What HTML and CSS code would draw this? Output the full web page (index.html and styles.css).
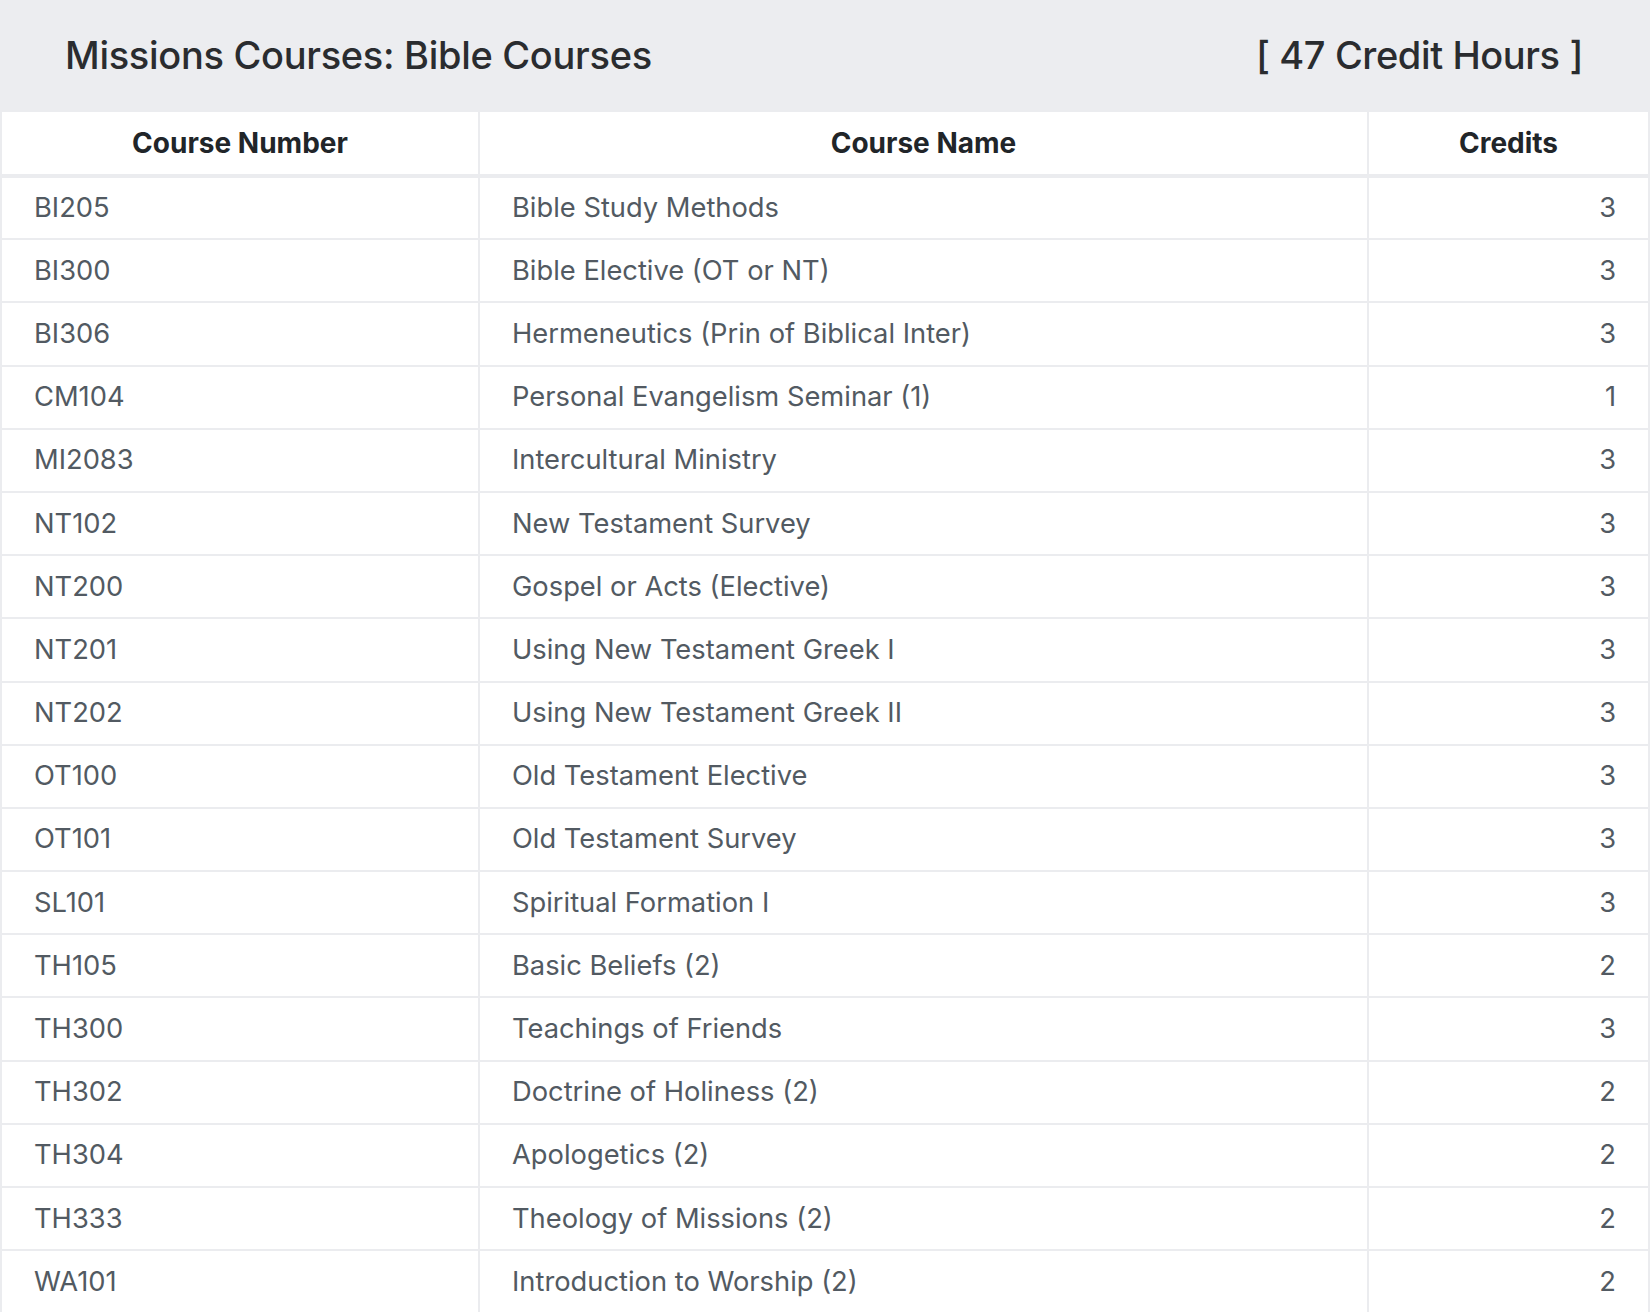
FILE: index.html
```html
<!DOCTYPE html>
<html lang="en">
<head>
    <meta charset="UTF-8">
    <meta name="viewport" content="width=device-width, initial-scale=1.0">
    <title>Missions Courses: Bible Courses</title>
    <link rel="stylesheet" href="styles.css">
</head>
<body>
    <div class="card">
        <div class="card-header">
            <h4>Missions Courses: Bible Courses</h4>
            <span class="hours">[ 47 Credit Hours ]</span>
        </div>

        <table class="course-table">
            <thead>
                <tr>
                    <th class="col-num">Course Number</th>
                    <th class="col-name">Course Name</th>
                    <th class="col-credits">Credits</th>
                </tr>
            </thead>
            <tbody>
                <tr><td>BI205</td><td>Bible Study Methods</td><td class="credits">3</td></tr>
                <tr><td>BI300</td><td>Bible Elective (OT or NT)</td><td class="credits">3</td></tr>
                <tr><td>BI306</td><td>Hermeneutics (Prin of Biblical Inter)</td><td class="credits">3</td></tr>
                <tr><td>CM104</td><td>Personal Evangelism Seminar (1)</td><td class="credits">1</td></tr>
                <tr><td>MI2083</td><td>Intercultural Ministry</td><td class="credits">3</td></tr>
                <tr><td>NT102</td><td>New Testament Survey</td><td class="credits">3</td></tr>
                <tr><td>NT200</td><td>Gospel or Acts (Elective)</td><td class="credits">3</td></tr>
                <tr><td>NT201</td><td>Using New Testament Greek I</td><td class="credits">3</td></tr>
                <tr><td>NT202</td><td>Using New Testament Greek II</td><td class="credits">3</td></tr>
                <tr><td>OT100</td><td>Old Testament Elective</td><td class="credits">3</td></tr>
                <tr><td>OT101</td><td>Old Testament Survey</td><td class="credits">3</td></tr>
                <tr><td>SL101</td><td>Spiritual Formation I</td><td class="credits">3</td></tr>
                <tr><td>TH105</td><td>Basic Beliefs (2)</td><td class="credits">2</td></tr>
                <tr><td>TH300</td><td>Teachings of Friends</td><td class="credits">3</td></tr>
                <tr><td>TH302</td><td>Doctrine of Holiness (2)</td><td class="credits">2</td></tr>
                <tr><td>TH304</td><td>Apologetics (2)</td><td class="credits">2</td></tr>
                <tr><td>TH333</td><td>Theology of Missions (2)</td><td class="credits">2</td></tr>
                <tr><td>WA101</td><td>Introduction to Worship (2)</td><td class="credits">2</td></tr>
            </tbody>
        </table>
    </div>
</body>
</html>
```

FILE: styles.css
```css
* {
    margin: 0;
    padding: 0;
    box-sizing: border-box;
}

body {
    font-family: Inter, 'Noto Sans', sans-serif;
    background: #ecedf0;
    color: #212529;
}

.card {
    width: 1650px;
}

.card-header {
    height: 110px;
    display: flex;
    align-items: center;
    justify-content: space-between;
    padding: 0 67px 0 65px;
    background: #ecedf0;
    color: #2a2c2f;
}

.card-header h4 {
    font-size: 38px;
    font-weight: 500;
    letter-spacing: -0.3px;
}

.hours {
    font-size: 38px;
    font-weight: 500;
    letter-spacing: -0.4px;
}

.course-table {
    width: 100%;
    border-collapse: collapse;
    background: white;
    font-size: 27.3px;
}

.course-table th,
.course-table td {
    border: 2px solid #ebecef;
    padding: 0 32px;
    line-height: 36px;
}

.course-table th {
    height: 65px;
    font-size: 28px;
    font-weight: 700;
    text-align: center;
    color: #212529;
    border-bottom-width: 4px;
}

.course-table td {
    height: 63.2px;
    color: #525a62;
}

.col-num { width: 478px; }
.col-name { width: 889px; }

.credits {
    text-align: right;
}
```
